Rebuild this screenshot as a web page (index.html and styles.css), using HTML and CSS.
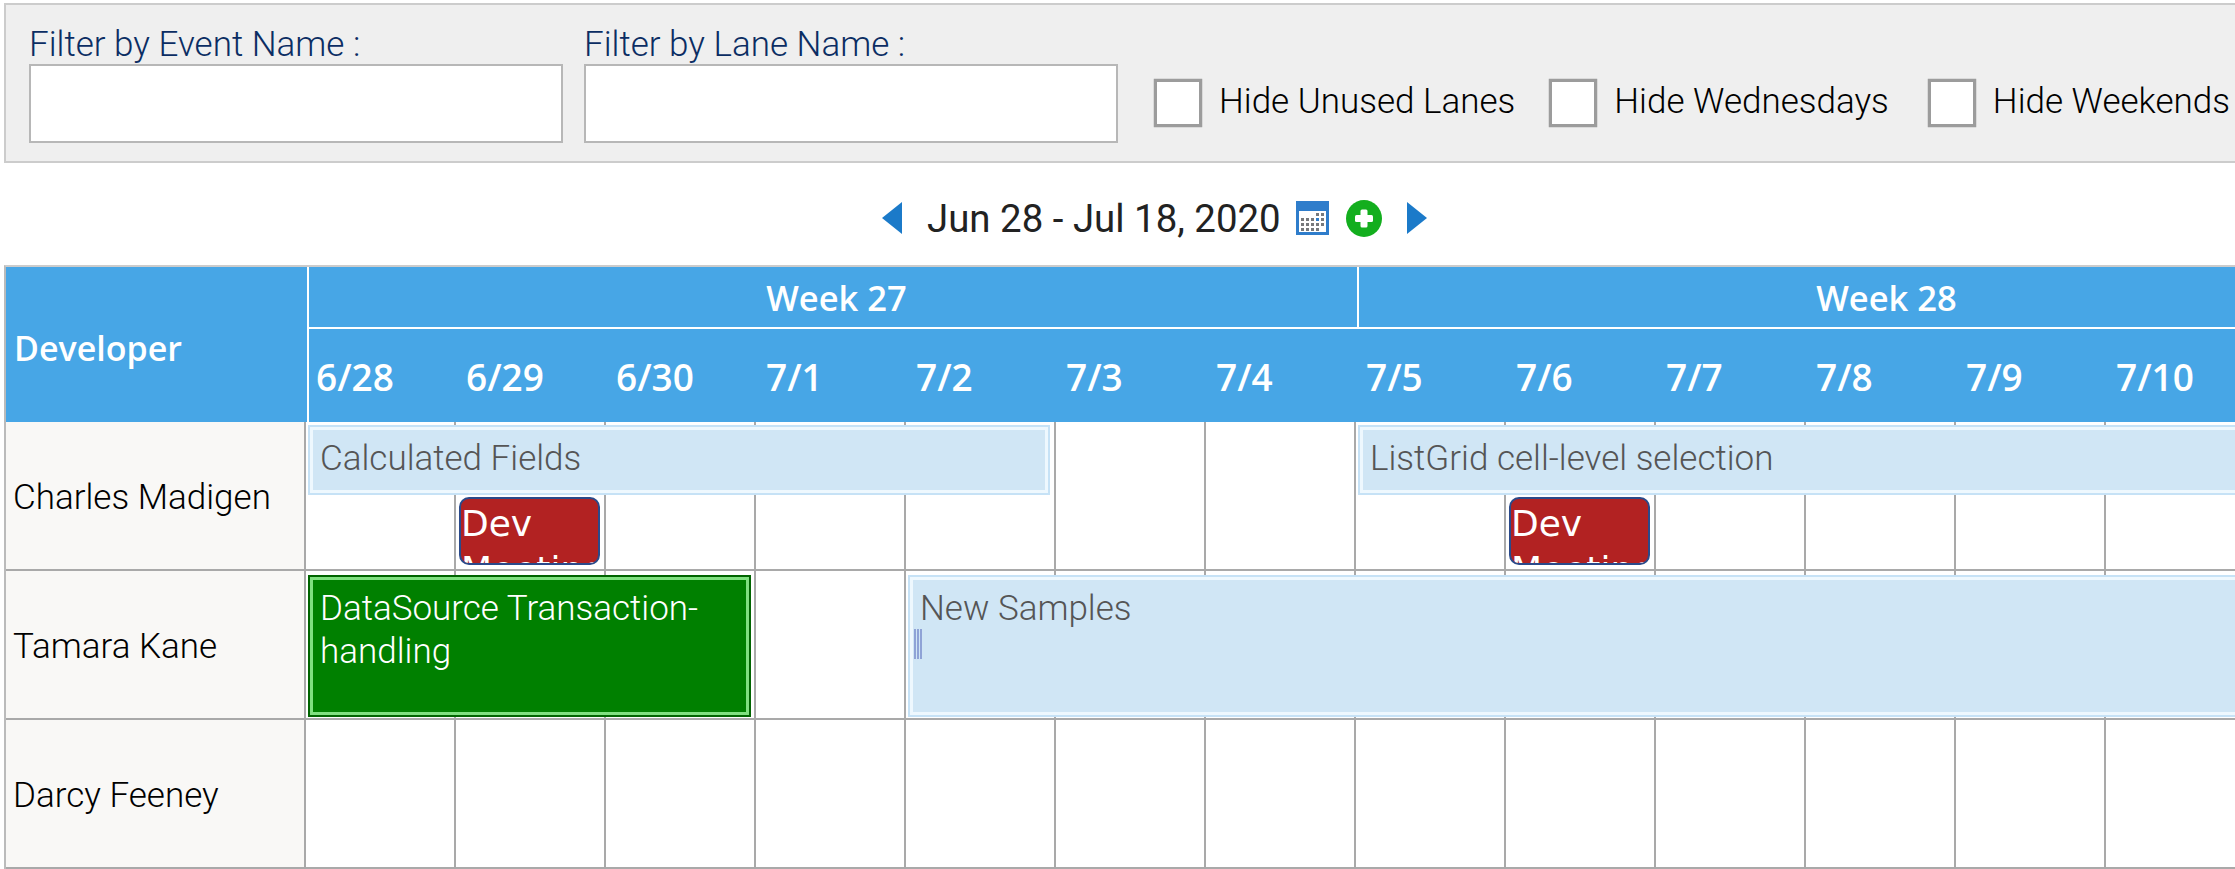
FILE: index.html

```html
<!DOCTYPE html>
<html>
<head>
    <title>Development Schedule</title>
    <link rel="stylesheet" href="styles.css">
</head>
<body>
    <!-- Filtros -->
    <div class="toolbar">
        <div class="filter">
            <label>Filter by Event Name :</label>
            <input type="text" class="filter-input" />
        </div>
        <div class="filter">
            <label>Filter by Lane Name :</label>
            <input type="text" class="filter-input" />
        </div>
        <label class="check check-lanes"><input type="checkbox" /><span>Hide Unused Lanes</span></label>
        <label class="check check-wed"><input type="checkbox" /><span>Hide Wednesdays</span></label>
        <label class="check check-end"><input type="checkbox" /><span>Hide Weekends</span></label>
    </div>

    <!-- Navegacion de fechas -->
    <div class="nav">
        <svg class="arrow" width="20" height="32" viewBox="0 0 20 32"><polygon points="20,0 20,32 0,16" fill="#1b7ac9"/></svg>
        <span class="range">Jun 28 - Jul 18, 2020</span>
        <svg class="cal" width="33" height="34" viewBox="0 0 33 34">
            <rect width="33" height="34" fill="#2f7dcb"/>
            <rect x="3" y="10" width="27" height="21" fill="#fff"/>
            <g fill="#77797c">
                <rect x="20" y="12" width="3" height="3"/><rect x="25" y="12" width="3" height="3"/>
                <rect x="5" y="17" width="3" height="3"/><rect x="10" y="17" width="3" height="3"/><rect x="15" y="17" width="3" height="3"/><rect x="25" y="17" width="3" height="3"/>
                <rect x="5" y="22" width="3" height="3"/><rect x="10" y="22" width="3" height="3"/><rect x="15" y="22" width="3" height="3"/><rect x="20" y="22" width="3" height="3"/><rect x="25" y="22" width="3" height="3"/>
                <rect x="5" y="27" width="3" height="3"/><rect x="10" y="27" width="3" height="3"/><rect x="15" y="27" width="3" height="3"/><rect x="20" y="27" width="3" height="3"/>
            </g>
            <rect x="20" y="17" width="3" height="3" fill="#2f7dcb"/>
        </svg>
        <svg class="add" width="36" height="37" viewBox="0 0 36 37">
            <ellipse cx="18" cy="18.5" rx="18" ry="18.5" fill="#13ae1e"/>
            <rect x="14.5" y="9.5" width="7" height="18" rx="1.5" fill="#fff"/>
            <rect x="9" y="15" width="18" height="7" rx="1.5" fill="#fff"/>
        </svg>
        <svg class="arrow arrow-next" width="20" height="32" viewBox="0 0 20 32"><polygon points="0,0 0,32 20,16" fill="#1b7ac9"/></svg>
    </div>

    <!-- Calendario -->
    <div class="timeline">
        <div class="head">
            <div class="head-lane">Developer</div>
            <div class="head-dates">
                <div class="weeks">
                    <div class="week">Week 27</div>
                    <div class="week">Week 28</div>
                </div>
                <div class="days">
                    <div class="day">6/28</div><div class="day">6/29</div><div class="day">6/30</div><div class="day">7/1</div><div class="day">7/2</div><div class="day">7/3</div><div class="day">7/4</div>
                    <div class="day">7/5</div><div class="day">7/6</div><div class="day">7/7</div><div class="day">7/8</div><div class="day">7/9</div><div class="day">7/10</div>
                </div>
            </div>
        </div>

        <div class="lane">
            <div class="lane-name">Charles Madigen</div>
            <div class="cells">
                <div class="cell"></div><div class="cell"></div><div class="cell"></div><div class="cell"></div><div class="cell"></div><div class="cell"></div><div class="cell"></div>
                <div class="cell"></div><div class="cell"></div><div class="cell"></div><div class="cell"></div><div class="cell"></div><div class="cell"></div><div class="cell"></div>
                <div class="event event-blue ev-calc">Calculated Fields</div>
                <div class="event event-blue ev-list">ListGrid cell-level selection</div>
                <div class="meeting ev-dev1">Dev Meeting</div>
                <div class="meeting ev-dev2">Dev Meeting</div>
            </div>
        </div>

        <div class="lane">
            <div class="lane-name">Tamara Kane</div>
            <div class="cells">
                <div class="cell"></div><div class="cell"></div><div class="cell"></div><div class="cell"></div><div class="cell"></div><div class="cell"></div><div class="cell"></div>
                <div class="cell"></div><div class="cell"></div><div class="cell"></div><div class="cell"></div><div class="cell"></div><div class="cell"></div><div class="cell"></div>
                <div class="event event-green ev-data">DataSource Transaction-handling</div>
                <div class="event event-blue ev-samples">New Samples<div class="grip"></div></div>
            </div>
        </div>

        <div class="lane">
            <div class="lane-name">Darcy Feeney</div>
            <div class="cells">
                <div class="cell"></div><div class="cell"></div><div class="cell"></div><div class="cell"></div><div class="cell"></div><div class="cell"></div><div class="cell"></div>
                <div class="cell"></div><div class="cell"></div><div class="cell"></div><div class="cell"></div><div class="cell"></div><div class="cell"></div><div class="cell"></div>
            </div>
        </div>
    </div>
</body>
</html>
```

FILE: styles.css

```css
body {
    margin: 0;
    width: 2235px;
    height: 869px;
    overflow: hidden;
    background-color: white;
    font-family: Roboto, sans-serif;
    font-weight: 300;
}

/* Filtros */
.toolbar {
    display: flex;
    width: 2400px;
    height: 156px;
    margin: 3px 0 0 4px;
    padding-left: 23px;
    background-color: #efefef;
    border: 2px solid #cccccc;
}

.filter {
    width: 534px;
    margin-right: 21px;
}

.filter label {
    display: block;
    height: 59px;
    padding-top: 19px;
    box-sizing: border-box;
    font-size: 35px;
    line-height: 42px;
    color: #0b2d63;
}

.filter-input {
    display: block;
    width: 100%;
    height: 79px;
    box-sizing: border-box;
    border: 2px solid #b7b7b7;
    background-color: white;
}

.check {
    display: flex;
    align-items: flex-start;
    padding-top: 74px;
    font-size: 35px;
    line-height: 46px;
    color: black;
}

.check input {
    appearance: none;
    width: 48px;
    height: 48px;
    margin: 0 17px 0 0;
    box-sizing: border-box;
    border: 3px solid #9c9c9c;
    background-color: white;
    box-shadow: 0 0 1px #777;
}

.check-lanes { margin-left: 15px; }
.check-wed { margin-left: 34px; }
.check-end { margin-left: 39px; }

/* Navegacion */
.nav {
    display: flex;
    align-items: center;
    height: 102px;
    box-sizing: border-box;
    padding: 8px 0 0 882px;
}

.range {
    margin: 0 15px 0 25px;
    font-size: 38.4px;
    font-weight: 400;
    color: #222222;
}

.add {
    margin-left: 17px;
}

.arrow-next {
    margin-left: 25px;
}

/* Calendario */
.timeline {
    width: 2400px;
    margin-left: 4px;
    border-top: 2px solid #cccccc;
    border-left: 2px solid #bbbbbb;
}

.head {
    display: flex;
    height: 155px;
    background-color: #47a6e6;
    color: white;
    font-family: "Open Sans", sans-serif;
    font-weight: 600;
}

.head-lane {
    display: flex;
    flex: none;
    align-items: center;
    width: 303px;
    padding: 7px 0 0 8px;
    box-sizing: border-box;
    font-size: 34px;
    border-right: 2px solid white;
}

.head-dates {
    flex: none;
}

.weeks {
    display: flex;
    height: 60px;
    border-bottom: 2px solid white;
}

.week {
    width: 1050px;
    box-sizing: border-box;
    padding: 2px 0 0 7px;
    border-right: 2px solid white;
    font-size: 34.5px;
    line-height: 58px;
    text-align: center;
}

.days {
    display: flex;
}

.day {
    width: 150px;
    box-sizing: border-box;
    padding: 26px 0 0 7px;
    font-size: 37px;
    line-height: 44px;
}

.lane {
    display: flex;
    height: 149px;
}

.lane-name {
    display: flex;
    align-items: center;
    width: 301px;
    box-sizing: border-box;
    padding: 4px 0 0 7px;
    background-color: #f9f8f6;
    border-right: 2px solid #a9a9a9;
    border-bottom: 2px solid #a9a9a9;
    font-size: 35px;
    color: black;
}

.cells {
    position: relative;
    display: flex;
}

.cell {
    width: 150px;
    box-sizing: border-box;
    border-right: 2px solid #a9a9a9;
    border-bottom: 2px solid #a9a9a9;
}

/* Eventos */
.event {
    position: absolute;
    top: 3px;
    box-sizing: border-box;
    border-width: 2px;
    border-style: solid;
    padding: 10px 9px 0 10px;
    font-size: 35px;
    line-height: 43px;
}

.event-blue {
    height: 70px;
    background-color: #d0e6f5;
    border-color: #c6e2f6;
    box-shadow: inset 0 0 0 3px #eef8fe;
    color: #555555;
}

.event-green {
    height: 142px;
    padding: 10px 6px 0 10px;
    background-color: #008000;
    border-color: #006400;
    box-shadow: inset 0 0 0 3px #80e080;
    color: white;
}

.ev-calc { left: 2px; width: 742px; }
.ev-list { left: 1052px; width: 1300px; }
.ev-data { left: 2px; top: 4px; width: 443px; }
.ev-samples { left: 602px; top: 4px; width: 1700px; height: 142px; }

.grip {
    position: absolute;
    left: 4px;
    top: 52px;
    width: 9px;
    height: 30px;
    background: repeating-linear-gradient(90deg, #8fa3d6 0, #8fa3d6 2px, #d0e6f5 2px, #d0e6f5 3px);
}

.meeting {
    position: absolute;
    top: 75px;
    width: 141px;
    height: 68px;
    box-sizing: border-box;
    overflow: hidden;
    padding: 2px 0 0 0;
    background-color: #b22222;
    border: 2px solid #2a4a8a;
    border-radius: 10px;
    font-family: "DejaVu Sans", sans-serif;
    font-weight: 400;
    font-size: 36px;
    line-height: 46px;
    color: white;
}

.ev-dev1 { left: 153px; }
.ev-dev2 { left: 1203px; }
```
